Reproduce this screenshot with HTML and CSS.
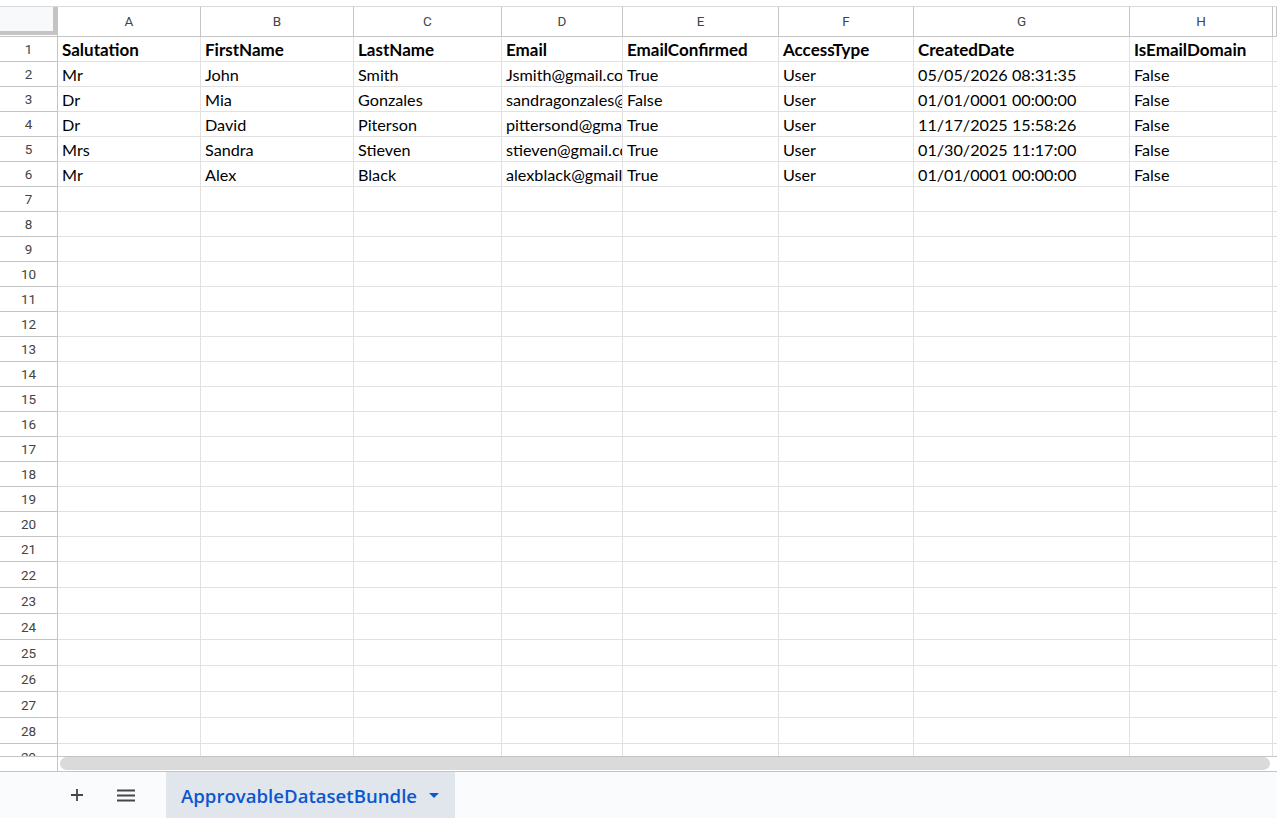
FILE: index.html
```html
<!DOCTYPE html>
<html lang="en">

<head>
    <meta charset="UTF-8">
    <meta name="viewport" content="width=device-width, initial-scale=1.0">
    <title>ApprovableDatasetBundle</title>
    <link rel="stylesheet" href="styles.css">
</head>

<body>
    <div class="top-edge"></div>

    <div class="grid">
        <div class="row head">
            <div class="corner"><span></span></div>
            <div>A</div><div>B</div><div>C</div><div>D</div><div>E</div><div>F</div><div>G</div><div>H</div><div></div>
        </div>
        <div class="row bold">
            <div class="rh">1</div>
            <div>Salutation</div><div>FirstName</div><div>LastName</div><div>Email</div><div>EmailConfirmed</div><div>AccessType</div><div>CreatedDate</div><div>IsEmailDomain</div><div></div>
        </div>
        <div class="row">
            <div class="rh">2</div>
            <div>Mr</div><div>John</div><div>Smith</div><div>Jsmith@gmail.com</div><div>True</div><div>User</div><div>05/05/2026 08:31:35</div><div>False</div><div></div>
        </div>
        <div class="row">
            <div class="rh">3</div>
            <div>Dr</div><div>Mia</div><div>Gonzales</div><div>sandragonzales@gmail.com</div><div>False</div><div>User</div><div>01/01/0001 00:00:00</div><div>False</div><div></div>
        </div>
        <div class="row">
            <div class="rh">4</div>
            <div>Dr</div><div>David</div><div>Piterson</div><div>pittersond@gmail.com</div><div>True</div><div>User</div><div>11/17/2025 15:58:26</div><div>False</div><div></div>
        </div>
        <div class="row">
            <div class="rh">5</div>
            <div>Mrs</div><div>Sandra</div><div>Stieven</div><div>stieven@gmail.com</div><div>True</div><div>User</div><div>01/30/2025 11:17:00</div><div>False</div><div></div>
        </div>
        <div class="row">
            <div class="rh">6</div>
            <div>Mr</div><div>Alex</div><div>Black</div><div>alexblack@gmail.com</div><div>True</div><div>User</div><div>01/01/0001 00:00:00</div><div>False</div><div></div>
        </div>
        <div class="row"><div class="rh">7</div><div></div><div></div><div></div><div></div><div></div><div></div><div></div><div></div><div></div></div>
        <div class="row"><div class="rh">8</div><div></div><div></div><div></div><div></div><div></div><div></div><div></div><div></div><div></div></div>
        <div class="row"><div class="rh">9</div><div></div><div></div><div></div><div></div><div></div><div></div><div></div><div></div><div></div></div>
        <div class="row"><div class="rh">10</div><div></div><div></div><div></div><div></div><div></div><div></div><div></div><div></div><div></div></div>
        <div class="row"><div class="rh">11</div><div></div><div></div><div></div><div></div><div></div><div></div><div></div><div></div><div></div></div>
        <div class="row"><div class="rh">12</div><div></div><div></div><div></div><div></div><div></div><div></div><div></div><div></div><div></div></div>
        <div class="row"><div class="rh">13</div><div></div><div></div><div></div><div></div><div></div><div></div><div></div><div></div><div></div></div>
        <div class="row"><div class="rh">14</div><div></div><div></div><div></div><div></div><div></div><div></div><div></div><div></div><div></div></div>
        <div class="row"><div class="rh">15</div><div></div><div></div><div></div><div></div><div></div><div></div><div></div><div></div><div></div></div>
        <div class="row"><div class="rh">16</div><div></div><div></div><div></div><div></div><div></div><div></div><div></div><div></div><div></div></div>
        <div class="row"><div class="rh">17</div><div></div><div></div><div></div><div></div><div></div><div></div><div></div><div></div><div></div></div>
        <div class="row"><div class="rh">18</div><div></div><div></div><div></div><div></div><div></div><div></div><div></div><div></div><div></div></div>
        <div class="row"><div class="rh">19</div><div></div><div></div><div></div><div></div><div></div><div></div><div></div><div></div><div></div></div>
        <div class="row"><div class="rh">20</div><div></div><div></div><div></div><div></div><div></div><div></div><div></div><div></div><div></div></div>
        <div class="row"><div class="rh">21</div><div></div><div></div><div></div><div></div><div></div><div></div><div></div><div></div><div></div></div>
        <div class="row tall"><div class="rh">22</div><div></div><div></div><div></div><div></div><div></div><div></div><div></div><div></div><div></div></div>
        <div class="row tall"><div class="rh">23</div><div></div><div></div><div></div><div></div><div></div><div></div><div></div><div></div><div></div></div>
        <div class="row tall"><div class="rh">24</div><div></div><div></div><div></div><div></div><div></div><div></div><div></div><div></div><div></div></div>
        <div class="row tall"><div class="rh">25</div><div></div><div></div><div></div><div></div><div></div><div></div><div></div><div></div><div></div></div>
        <div class="row tall"><div class="rh">26</div><div></div><div></div><div></div><div></div><div></div><div></div><div></div><div></div><div></div></div>
        <div class="row tall"><div class="rh">27</div><div></div><div></div><div></div><div></div><div></div><div></div><div></div><div></div><div></div></div>
        <div class="row tall"><div class="rh">28</div><div></div><div></div><div></div><div></div><div></div><div></div><div></div><div></div><div></div></div>
        <div class="row tall"><div class="rh">29</div><div></div><div></div><div></div><div></div><div></div><div></div><div></div><div></div><div></div></div>
    </div>

    <div class="hscroll">
        <div class="hs-left"></div>
        <div class="hs-track"><div class="thumb"></div></div>
    </div>

    <div class="tabbar">
        <button class="icon-btn add" title="Add sheet">
            <svg width="14" height="14" viewBox="0 0 14 14"><path d="M7 1v12M1 7h12" stroke="#444746" stroke-width="1.8"/></svg>
        </button>
        <button class="icon-btn all" title="All sheets">
            <svg width="18" height="13" viewBox="0 0 18 13"><path d="M0 1.5h18M0 6.5h18M0 11.5h18" stroke="#444746" stroke-width="1.8"/></svg>
        </button>
        <div class="tab">
            <span>ApprovableDatasetBundle</span>
            <svg width="10" height="5" viewBox="0 0 10 5"><path d="M0 0h10L5 5z" fill="#0b57d0"/></svg>
        </div>
    </div>
</body>

</html>
```

FILE: styles.css
```css
body {
    margin: 0;
    background-color: #fff;
    font-family: Lato, "Liberation Sans", Arial, sans-serif;
    overflow: hidden;
}

.top-edge {
    height: 6px;
    border-bottom: 1px solid #dadada;
}

.grid {
    height: 749px;
    overflow: hidden;
}

.row {
    display: grid;
    grid-template-columns: 58px 143px 153px 148px 121px 156px 135px 216px 143px 1fr;
    height: 25px;
}

.row.tall {
    height: 26px;
}

.row > div {
    box-sizing: border-box;
    border-right: 1px solid #e1e1e1;
    border-bottom: 1px solid #e1e1e1;
    padding: 0 4px 1px;
    display: flex;
    align-items: flex-end;
    overflow: hidden;
    white-space: nowrap;
    font-size: 16.2px;
    line-height: 20px;
    color: #000;
}

.row.bold > div {
    font-weight: bold;
    font-size: 17px;
}

.row > .rh {
    justify-content: center;
    align-items: center;
    padding: 0;
    font-family: Roboto, Arial, sans-serif;
    font-size: 13.5px;
    font-weight: normal !important;
    color: #444;
    border-right-color: #c4c4c4;
    border-bottom-color: #c4c4c4;
}

.row.bold > .rh {
    font-size: 13.5px;
}

/* column letters */
.row.head {
    height: 30px;
}

.row.head > div {
    justify-content: center;
    align-items: center;
    padding: 0 0 1px;
    font-family: Roboto, Arial, sans-serif;
    font-size: 13.5px;
    color: #444;
    border-right-color: #c4c4c4;
    border-bottom-color: #c4c4c4;
}

.row.head > .corner {
    display: block;
    padding: 0;
}

.corner span {
    display: block;
    box-sizing: border-box;
    width: 57px;
    height: 28px;
    background-color: #f8f9fa;
    border-right: 4px solid #c4c4c4;
    border-bottom: 4px solid #c4c4c4;
}

/* horizontal scroll bar */
.hscroll {
    display: flex;
    height: 16px;
    box-sizing: border-box;
    border-top: 1px solid #c4c4c4;
    border-bottom: 1px solid #c4c4c4;
}

.hs-left {
    width: 58px;
    box-sizing: border-box;
    border-right: 1px solid #c4c4c4;
}

.hs-track {
    flex: 1;
    padding: 0 7px 1px 2px;
}

.thumb {
    height: 13px;
    border-radius: 7px;
    background-color: #dadada;
}

/* sheet tabs */
.tabbar {
    display: flex;
    align-items: stretch;
    height: 46px;
    background-color: #f9fbfd;
}

.icon-btn {
    border: none;
    background: none;
    padding: 0;
    display: flex;
    align-items: center;
    justify-content: center;
    cursor: pointer;
}

.icon-btn.add {
    width: 28px;
    margin-left: 63px;
}

.icon-btn.all {
    width: 28px;
    margin-left: 21px;
}

.tab {
    margin-left: 26px;
    width: 289px;
    box-sizing: border-box;
    padding: 0 16px 0 15px;
    display: flex;
    align-items: center;
    justify-content: space-between;
    background-color: #e1e6ed;
    color: #0b57d0;
    font-family: "Open Sans", Roboto, Arial, sans-serif;
    font-weight: 600;
    font-size: 18.6px;
}

.tab svg {
    margin-top: 1px;
}
```
